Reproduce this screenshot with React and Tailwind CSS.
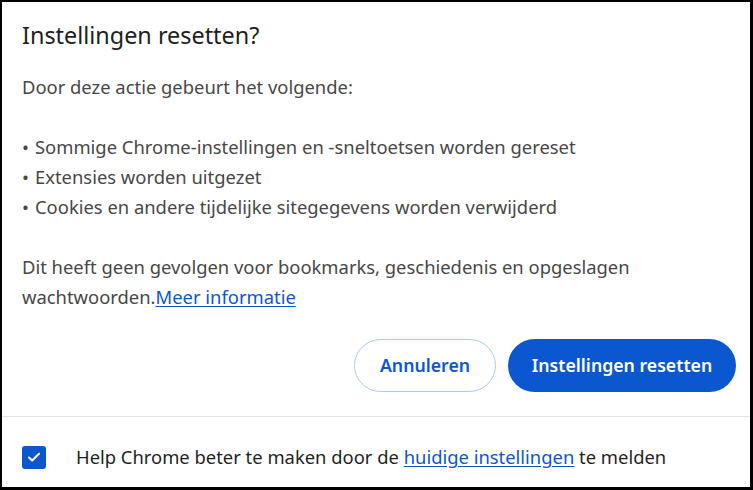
import React from "react";

const font = { fontFamily: '"Noto Sans", "Open Sans", sans-serif' };

const Bullet = ({ children }) => (
  <div className="flex">
    <span className="w-[13px]">•</span>
    <span>{children}</span>
  </div>
);

export default function App() {
  return (
    <div
      className="w-[753px] h-[490px] bg-white border-black border-t-2 border-l-2 border-r-[3px] border-b-[3px] flex flex-col overflow-hidden"
      style={font}
    >
      <div className="pl-[20px] pr-[14px]">
        <h1 className="mt-[19px] h-[28px] leading-[28px] text-[23.4px] text-[#1f1f1f]">
          Instellingen resetten?
        </h1>

        <div className="mt-[23px] text-[18.4px] leading-[30px] text-[#474747]">
          <p>Door deze actie gebeurt het volgende:</p>
          <div className="mt-[30px]">
            <Bullet>Sommige Chrome-instellingen en -sneltoetsen worden gereset</Bullet>
            <Bullet>Extensies worden uitgezet</Bullet>
            <Bullet>Cookies en andere tijdelijke sitegegevens worden verwijderd</Bullet>
          </div>
          <p className="mt-[30px]">
            Dit heeft geen gevolgen voor bookmarks, geschiedenis en opgeslagen
            <br />
            wachtwoorden.
            <a href="#" className="text-[#0b57d0] underline underline-offset-2">
              Meer informatie
            </a>
          </p>
        </div>

        <div className="mt-[27px] flex justify-end gap-[12px]">
          <button className="w-[142px] h-[53px] rounded-full border border-[#a8c7fa] text-[#0b57d0] text-[17.7px] font-semibold">
            Annuleren
          </button>
          <button className="w-[228px] h-[53px] rounded-full bg-[#0b57d0] text-white text-[17.7px] font-semibold">
            Instellingen resetten
          </button>
        </div>
      </div>

      <div className="mt-[24px] border-t border-[#e3e3e3]" />

      <div className="pl-[20px] mt-[27px] flex items-center">
        <div className="w-[24px] h-[23px] rounded-[3px] bg-[#0b57d0] flex items-center justify-center">
          <svg width="16" height="16" viewBox="0 0 16 16" fill="none">
            <path d="M3 8.5l3.2 3L13 4.8" stroke="white" strokeWidth="2" strokeLinecap="round" strokeLinejoin="round" />
          </svg>
        </div>
        <p className="ml-[30px] text-[18.4px] leading-[26px] text-[#1f1f1f]">
          Help Chrome beter te maken door de{" "}
          <a href="#" className="text-[#0b57d0] underline underline-offset-2">
            huidige instellingen
          </a>{" "}
          te melden
        </p>
      </div>
    </div>
  );
}
